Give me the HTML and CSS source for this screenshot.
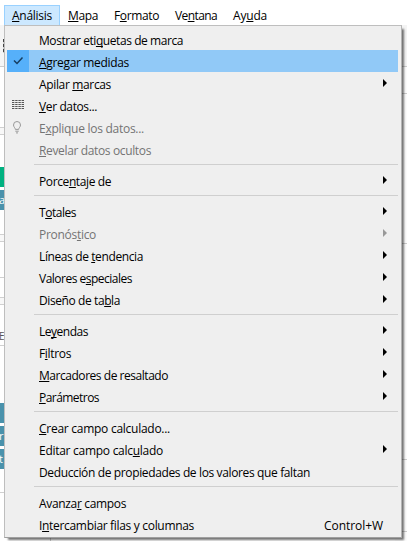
FILE: index.html
```html
<!DOCTYPE html>
<html lang="es">
<head>
<meta charset="utf-8">
<title>Análisis</title>
<link rel="stylesheet" href="styles.css">
</head>
<body>
<nav class="menubar">
  <span class="tab open"><b class="t" data-w="40"><u>A</u>nálisis</b></span>
  <span class="tab"><b class="t" data-w="30"><u>M</u>apa</b></span>
  <span class="tab"><b class="t" data-w="45">F<u>o</u>rmato</b></span>
  <span class="tab"><b class="t" data-w="42">Ve<u>n</u>tana</b></span>
  <span class="tab"><b class="t" data-w="34">Ay<u>u</u>da</b></span>
</nav>
<main class="workspace">
  <div class="shelf">
    <div class="toolbar"><i class="grip"></i></div>
    <div class="pane p1"></div>
    <div class="pane p2"></div>
    <div class="pane p3"></div>
    <div class="pill green"></div>
    <div class="pill">a</div>
    <div class="pane p4"></div>
    <div class="pane p2"></div>
    <div class="pane p5"></div>
    <div class="pane p6"></div>
    <div class="pane p2"></div>
    <div class="pane p7">E</div>
    <div class="pane p8"></div>
    <div class="pill"></div>
    <div class="pill">r</div>
    <div class="pill">t</div>
    <div class="pane p9"></div>
    <div class="pane p10"></div>
  </div>
  <div class="canvas"><i class="c1"></i><i class="c2"></i><i class="c3"></i><i class="c4"></i><i class="c5"></i></div>
</main>
<div class="menu" id="menu">
  <div class="item"><span class="t" data-w="144">Mostrar eti<u>q</u>uetas de marca</span></div>
  <div class="item selected"><svg class="check" viewBox="0 0 22 22"><path d="M7 10.5 10 13.5 15.5 7.5"/></svg><span class="t" data-w="90"><u>A</u>gregar medidas</span></div>
  <div class="item sub"><span class="t" data-w="72">Apilar <u>m</u>arcas</span></div>
  <div class="item"><svg class="icon" viewBox="0 0 12 10"><path d="M0 .5H12M0 2.5H12M0 4.5H12M0 6.5H12M0 8.5H12" stroke="#555" stroke-dasharray="2.4 .8"/></svg><span class="t" data-w="58"><u>V</u>er datos...</span></div>
  <div class="item off"><svg class="icon bulb" viewBox="0 0 10 13"><path d="M3.3 8.4C3.3 6.8 1.5 6 1.5 4a3.5 3.5 0 0 1 7 0c0 2-1.8 2.8-1.8 4.4ZM3.3 10.2h3.4M4 11.9h2" fill="none" stroke="#999"/></svg><span class="t" data-w="105">E<u>x</u>plique los datos...</span></div>
  <div class="item off"><span class="t" data-w="112"><u>R</u>evelar datos ocultos</span></div>
  <hr>
  <div class="item sub"><span class="t" data-w="72">Porce<u>n</u>taje de</span></div>
  <hr>
  <div class="item sub"><span class="t" data-w="37">T<u>o</u>tales</span></div>
  <div class="item sub off"><span class="t" data-w="57">Pronós<u>t</u>ico</span></div>
  <div class="item sub"><span class="t" data-w="104">Líneas de <u>t</u>endencia</span></div>
  <div class="item sub"><span class="t" data-w="93">Valores e<u>s</u>peciales</span></div>
  <div class="item sub"><span class="t" data-w="81">Diseño de ta<u>b</u>la</span></div>
  <hr>
  <div class="item sub"><span class="t" data-w="49">Le<u>y</u>endas</span></div>
  <div class="item sub"><span class="t" data-w="32">F<u>i</u>ltros</span></div>
  <div class="item sub"><span class="t" data-w="129"><u>M</u>arcadores de resaltado</span></div>
  <div class="item sub"><span class="t" data-w="60"><u>P</u>arámetros</span></div>
  <hr>
  <div class="item"><span class="t" data-w="131"><u>C</u>rear campo calculado...</span></div>
  <div class="item sub"><span class="t" data-w="124">Editar campo calc<u>u</u>lado</span></div>
  <div class="item"><span class="t" data-w="271">Deducción de propiedades de los valores que faltan</span></div>
  <hr>
  <div class="item"><span class="t" data-w="87">Avanza<u>r</u> campos</span></div>
  <div class="item"><span class="t" data-w="155">I<u>n</u>tercambiar filas y columnas</span><span class="key t" data-w="59">Control+W</span></div>
</div>
<script src="menu.js"></script>
</body>
</html>
```
FILE: menu.js
```js
// Tracks each label to its nominal width.
document.querySelectorAll('.t').forEach(function (label) {
  var gap = Number(label.dataset.w) - label.getBoundingClientRect().width;
  label.style.letterSpacing = gap / label.textContent.length + 'px';
});
// Adds the submenu arrows.
document.querySelectorAll('.sub').forEach(function (item) {
  var arrow = document.createElement('i');
  arrow.className = 'arrow';
  item.appendChild(arrow);
});
```
FILE: styles.css
```css
* { box-sizing: border-box; }
body {
  margin: 0;
  height: 541px;
  overflow: hidden;
  background: #fff;
  color: #000;
  font: 12px/16px "Open Sans", "Noto Sans", sans-serif;
  position: relative;
}
u { text-decoration: underline; text-decoration-thickness: 1px; text-underline-offset: 1px; text-decoration-skip-ink: none; }
.t { display: inline-block; white-space: nowrap; font-weight: 400; flex: none; }
.menubar { display: flex; height: 25px; padding: 5px 0 0 4px; }
.tab { height: 20px; padding: 3px 8px 0; }
.open { background: #cce8ff; border: 1px solid #99d1ff; border-bottom: 0; padding: 2px 7px 0; }

.workspace { display: flex; justify-content: space-between; height: 516px; }
.shelf { width: 51px; height: 516px; overflow: hidden; border-right: 1px solid #ccc; background: #fff; font-size: 11px; line-height: 19px; }
.toolbar { height: 42px; background: #f5f5f5; border-bottom: 1px solid #ccc; padding: 14px 0 0 3px; }
.grip { display: block; width: 1px; height: 14px; background: repeating-linear-gradient(#444 0 3px, #ccc 3px 5px); }
.pane { border-bottom: 1px solid #d0d0d0; }
.p1 { height: 61px; }
.p2 { height: 7px; background: #f8f8f8; }
.p3 { height: 32px; border: 0; }
.p4 { height: 22px; }
.p5 { height: 36px; }
.p6 { height: 20px; }
.p7 { height: 41px; padding-top: 23px; line-height: 16px; font-size: 10px; color: #555; text-indent: -1px; }
.p8 { height: 57px; border: 0; }
.p9 { height: 21px; }
.p10 { height: 49px; border: 0; }
.pill { height: 20px; margin-bottom: 3px; background: #4a92ac; color: #fff; text-indent: -1px; }
.green { background: #00b180; }
.canvas { width: 12px; display: flex; flex-direction: column; background: #fcfcfc; }
.canvas i { border-bottom: 1px solid #ccc; }
.c1 { height: 42px; background: #f4f4f4; }
.c2 { height: 27px; }
.c3 { height: 150px; }
.c4 { height: 216px; }
.c5 { height: 72px; }

.menu {
  position: absolute;
  left: 4px;
  top: 25px;
  width: 398px;
  height: 513px;
  padding: 2px;
  background: #efefef;
  border: 1px solid #bebebe;
  border-right-color: #b4b4b4;
  border-bottom-color: #a0a0a0;
  box-shadow: 3px 3px 2px -1px rgba(0,0,0,.55);
}
.item { display: flex; align-items: center; height: 22px; padding: 4px 12px 0 32px; position: relative; }
.selected { background: #91c9f7; margin-right: 1px; margin-left: -1px; padding-left: 33px; box-shadow: inset 1px 0 #efefef; }
.off { color: #747474; }
.check { position: absolute; left: 1px; top: 0; width: 22px; height: 22px; background: #56b0fa; }
.check path { fill: none; stroke: #173e60; stroke-width: 1.5; }
.icon { position: absolute; left: 5px; top: 6px; width: 12px; height: 10px; }
.bulb { left: 5px; top: 5px; width: 10px; height: 13px; }
.arrow { margin-left: auto; margin-top: -4px; border: solid transparent; border-width: 4px 0 4px 4px; border-left-color: #000; }
.off .arrow { border-left-color: #999; }
.key { margin-left: auto; margin-right: 4px; }
hr { height: 1px; margin: 4px 1px 4px 27px; border: 0; background: #cfcfcf; }
```
